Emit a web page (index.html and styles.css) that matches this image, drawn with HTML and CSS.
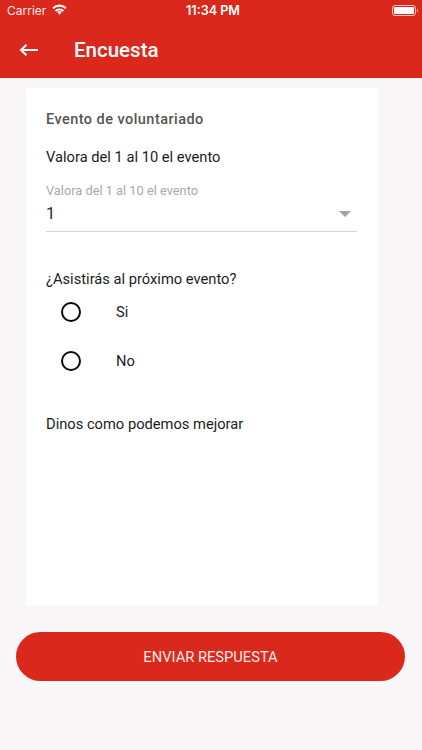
FILE: index.html
```html
<!DOCTYPE html>
<html lang="es">
<head>
<meta charset="utf-8">
<title>Encuesta</title>
<link rel="stylesheet" href="styles.css">
</head>
<body>
<div class="screen">
  <header class="header">
    <div class="status">
      <div class="status-left">
        <span class="carrier">Carrier</span>
        <svg class="wifi" width="15" height="11" viewBox="0 0 15 11"><path d="M7.5 10.8 L5.2 8.1 A3.4 3.4 0 0 1 9.8 8.1 Z M0.4 3.5 A10.2 10.2 0 0 1 14.6 3.5 L13.2 5.1 A8 8 0 0 0 1.8 5.1 Z M2.9 6.2 A6.8 6.8 0 0 1 12.1 6.2 L10.8 7.7 A4.8 4.8 0 0 0 4.2 7.7 Z" fill="#fff"/></svg>
      </div>
      <span class="time">11:34 PM</span>
      <div class="battery"><span class="battery-fill"></span><span class="battery-tip"></span></div>
    </div>
    <div class="toolbar">
      <svg class="back" width="20" height="14" viewBox="0 0 20 14"><path d="M19 7 H2 M7.5 1.8 L2 7 L7.5 12.2" fill="none" stroke="#fff" stroke-width="2"/></svg>
      <h1 class="title">Encuesta</h1>
    </div>
  </header>
  <main class="card">
    <h2 class="event">Evento de voluntariado</h2>
    <p class="question q-rate">Valora del 1 al 10 el evento</p>
    <div class="select">
      <span class="select-label">Valora del 1 al 10 el evento</span>
      <div class="select-row">
        <span class="select-value">1</span>
        <span class="caret"></span>
      </div>
    </div>
    <p class="question q-attend">¿Asistirás al próximo evento?</p>
    <div class="radios">
      <div class="radio"><span class="circle"></span><span class="radio-text">Si</span></div>
      <div class="radio"><span class="circle"></span><span class="radio-text">No</span></div>
    </div>
    <p class="question q-improve">Dinos como podemos mejorar</p>
  </main>
  <button class="send">ENVIAR RESPUESTA</button>
</div>
</body>
</html>
```
FILE: styles.css
```css
* { box-sizing: border-box; }
html, body { margin: 0; padding: 0; }
body { font-family: Roboto, "Liberation Sans", sans-serif; background: #f8f6f7; }
.screen { width: 422px; height: 750px; overflow: hidden; display: flex; flex-direction: column; background: #f8f6f7; }
.header { height: 78px; background: #da291c; color: #fff; flex: none; }
.status { height: 21px; display: flex; align-items: center; justify-content: space-between; position: relative; padding: 0 6px 0 7px; }
.status-left { display: flex; align-items: center; gap: 6px; }
.carrier { font-family: Inter, sans-serif; font-size: 12px; color: #fdeceb; }
.wifi { display: block; margin-top: -2px; }
.time { font-family: Inter, sans-serif; font-size: 12.6px; font-weight: 600; position: absolute; left: 186px; top: 3px; line-height: 16px; }
.battery { width: 24px; height: 11px; border: 1px solid #f6c4c0; border-radius: 3px; padding: 1px; position: relative; margin-top: -1px; }
.battery-fill { display: block; height: 100%; background: #fff; border-radius: 1px; }
.battery-tip { position: absolute; right: -3px; top: 3px; width: 1.5px; height: 3px; background: #f0aaa5; }
.toolbar { display: flex; align-items: center; height: 57px; padding: 0 0 0 19px; }
.back { display: block; }
.title { margin: 0 0 0 35px; font-size: 20.5px; font-weight: 500; color: #fff; line-height: 24px; }
.card { width: 352px; height: 518px; margin: 10px 0 0 26px; background: #fff; padding: 23px 20px 0; flex: none; }
.event { margin: 0; font-size: 14.5px; font-weight: 500; letter-spacing: 0.45px; line-height: 18px; color: #555; }
.question { margin: 0; font-size: 14.7px; line-height: 18px; color: #1c1c1c; }
.q-rate { margin-top: 19px; }
.select { margin-top: 17px; width: 311px; height: 49px; border-bottom: 1px solid #d6d6d6; }
.select-label { display: block; font-size: 12.8px; line-height: 16px; color: #a9a9a9; }
.select-row { display: flex; justify-content: space-between; align-items: center; height: 24px; margin-top: 3px; padding-right: 6px; }
.select-value { font-size: 16.5px; line-height: 24px; color: #2a2a2a; }
.caret { width: 0; height: 0; border-left: 6px solid transparent; border-right: 6px solid transparent; border-top: 6px solid #a3a3a3; }
.q-attend { margin-top: 38px; }
.radios { margin-top: 14px; display: flex; flex-direction: column; gap: 29px; padding-left: 15px; }
.radio { display: flex; align-items: center; height: 20px; }
.circle { width: 20px; height: 20px; border: 2px solid #0a0a0a; border-radius: 50%; flex: none; }
.radio-text { margin-left: 35px; font-size: 14.7px; color: #1c1c1c; }
.q-improve { margin-top: 44px; }
.send { width: 389px; height: 49px; margin: 26px 0 0 16px; flex: none; border: 0; border-radius: 25px; background: #da291c; color: #fde9e7; font-family: Roboto, sans-serif; font-size: 14.7px; padding: 0; }
```
